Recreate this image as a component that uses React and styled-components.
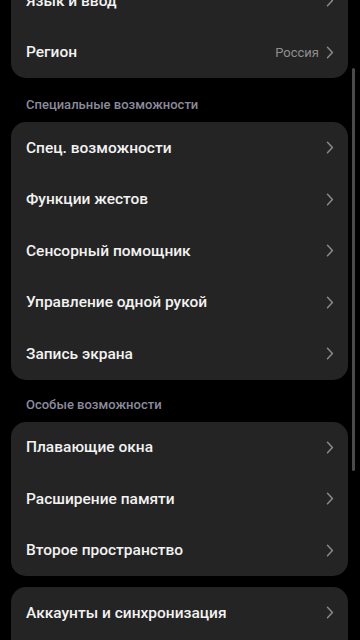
import styled, { createGlobalStyle } from "styled-components";

const GlobalStyle = createGlobalStyle`
  html, body {
    margin: 0;
    padding: 0;
    background: #000;
  }
  body {
    font-family: Roboto, "Noto Sans", sans-serif;
    -webkit-font-smoothing: antialiased;
  }
`;

const Screen = styled.div`
  width: 360px;
  height: 640px;
  background: #000;
  overflow: hidden;
  position: relative;
`;

const Content = styled.div`
  display: flex;
  flex-direction: column;
  padding: 0 12px 0 11px;
  margin-top: -25px;
`;

const Card = styled.div`
  background: #242424;
  border-radius: 15px;
  display: flex;
  flex-direction: column;
  margin-top: ${(props) => props.gap || 0}px;
`;

const Row = styled.div`
  height: 51.5px;
  display: flex;
  align-items: center;
  padding: 0 14px 0 15px;
`;

const Label = styled.div`
  flex: 1;
  color: #f2f2f2;
  font-size: 15.5px;
  font-weight: 500;
`;

const Value = styled.span`
  color: #8e8e8e;
  font-size: 13px;
  margin-right: 7px;
`;

const SectionTitle = styled.div`
  color: #8b8b9c;
  font-size: 13px;
  font-weight: 500;
  padding: ${(props) => props.top || 19}px 15px 9px;
  line-height: 16px;
`;

const Scrollbar = styled.div`
  position: absolute;
  right: 5px;
  top: 68px;
  width: 3px;
  height: 403px;
  border-radius: 2px;
  background: #4a4a4a;
`;

const Chevron = () => (
  <svg width="8" height="13" viewBox="0 0 8 13">
    <path
      d="M1.5 1.2 L6.4 6.5 L1.5 11.8"
      fill="none"
      stroke="#8a8a8a"
      strokeWidth="1.5"
      strokeLinecap="round"
      strokeLinejoin="round"
    />
  </svg>
);

const Item = ({ title, value }) => (
  <Row>
    <Label>{title}</Label>
    {value && <Value>{value}</Value>}
    <Chevron />
  </Row>
);

export default function App() {
  return (
    <Screen>
      <GlobalStyle />
      <Content>
        <Card>
          <Item title="Язык и ввод" />
          <Item title="Регион" value="Россия" />
        </Card>
        <SectionTitle>Специальные возможности</SectionTitle>
        <Card>
          <Item title="Спец. возможности" />
          <Item title="Функции жестов" />
          <Item title="Сенсорный помощник" />
          <Item title="Управление одной рукой" />
          <Item title="Запись экрана" />
        </Card>
        <SectionTitle top={17}>Особые возможности</SectionTitle>
        <Card>
          <Item title="Плавающие окна" />
          <Item title="Расширение памяти" />
          <Item title="Второе пространство" />
        </Card>
        <Card gap={11}>
          <Item title="Аккаунты и синхронизация" />
          <Item title="Google" />
        </Card>
      </Content>
      <Scrollbar />
    </Screen>
  );
}
